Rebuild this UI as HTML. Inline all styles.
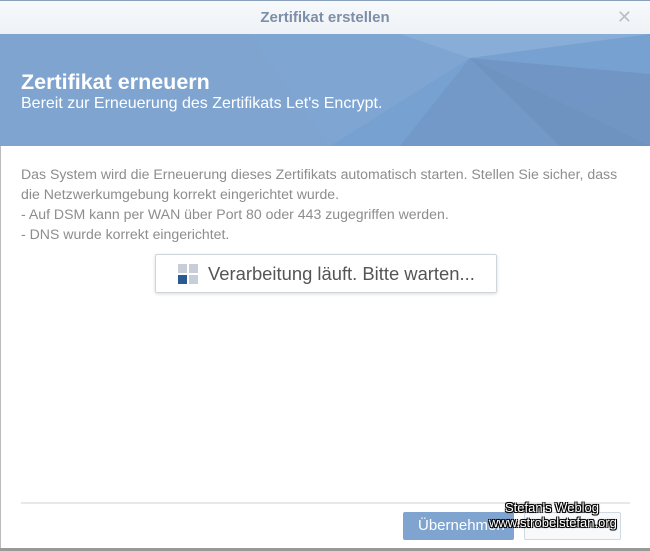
<!DOCTYPE html>
<html><head><meta charset="utf-8"><style>
*{margin:0;padding:0;box-sizing:border-box}
body{width:650px;height:551px;overflow:hidden;background:#fff;font-family:"Liberation Sans",sans-serif;position:relative}
.hdr{position:absolute;left:0;top:0;width:650px;height:34px;background:linear-gradient(#f7f9fb,#eef2f6);border-top:1px solid #8aa0bd;text-align:center;font-size:15px;font-weight:bold;color:#7d8fa8;line-height:33px}
.x{position:absolute;right:18px;top:0;font-weight:normal;color:#b8c0c8;font-size:18px}
.ban{position:absolute;left:0;top:34px;width:650px;height:112px;background:#7fa4d0;overflow:hidden}
.ban h1{position:absolute;left:21px;top:36px;color:#fff;font-size:21.5px;font-weight:bold}
.ban p{position:absolute;left:21px;top:61px;color:#fff;font-size:16px}
.txt{position:absolute;left:21px;top:164px;font-size:14.1px;line-height:20px;color:#8d8d8d;white-space:nowrap}
.box{position:absolute;left:155px;top:254px;width:342px;height:39px;border:1px solid #d0d5dc;border-radius:2px;box-shadow:0 1px 3px rgba(0,0,0,.15);font-size:18.4px;color:#555;line-height:37px;padding-left:52px;white-space:nowrap}
.sq{position:absolute;width:9px;height:9px;background:#c7ced8}
.sep{position:absolute;left:21px;top:502px;width:609px;height:2px;background:#e8e8e8}
.b1{position:absolute;left:403px;top:512px;width:111px;height:28px;background:#7fa4d0;border-radius:2px;color:#fff;font-size:15px;line-height:28px;padding-left:15px;white-space:nowrap}
.b2{position:absolute;left:524px;top:512px;width:97px;height:28px;border:1px solid #d0d8e2;background:#f7f9fb;border-radius:2px}
.wm{position:absolute;font-size:13px;color:#fff;text-shadow:-1px -1px 0 #000,1px -1px 0 #000,-1px 1px 0 #000,1px 1px 0 #000,0 0 2px #000}
</style></head><body>
<div style="position:absolute;left:0;top:0;width:1px;height:551px;background:#bbb"></div>
<div class="hdr">Zertifikat erstellen<span class="x">✕</span></div>
<div class="ban">
<svg width="650" height="112" style="position:absolute;left:0;top:0">
<polygon points="250,0 470,0 650,50 470,112 330,112" fill="#7ea8d6" opacity=".6"/>
<polygon points="470,24 650,0 650,112 330,112" fill="#73a0d0" opacity=".7"/>
<polygon points="470,24 400,112 650,112" fill="#7096c4" opacity=".7"/>
<polygon points="470,24 560,112 650,112 650,40" fill="#6e90bd" opacity=".6"/>
<polygon points="400,0 650,0 470,24" fill="#8bb0d8" opacity=".7"/>
</svg>
<h1>Zertifikat erneuern</h1>
<p>Bereit zur Erneuerung des Zertifikats Let's Encrypt.</p>
</div>
<div class="txt">Das System wird die Erneuerung dieses Zertifikats automatisch starten. Stellen Sie sicher, dass<br>die Netzwerkumgebung korrekt eingerichtet wurde.<br>- Auf DSM kann per WAN über Port 80 oder 443 zugegriffen werden.<br>- DNS wurde korrekt eingerichtet.</div>
<div class="box">
<div class="sq" style="left:22px;top:9px"></div><div class="sq" style="left:33px;top:9px"></div>
<div class="sq" style="left:22px;top:20px;background:#2b5a92"></div><div class="sq" style="left:33px;top:20px"></div>
Verarbeitung läuft. Bitte warten...</div>
<div class="sep"></div>
<div class="b1">Übernehmen</div>
<div class="b2"></div>
<div class="wm" style="left:505px;top:500px">Stefan's Weblog</div>
<div class="wm" style="left:489px;top:515px">www.strobelstefan.org</div>
<div style="position:absolute;left:0;top:548px;width:650px;height:3px;background:#999"></div>
</body></html>
